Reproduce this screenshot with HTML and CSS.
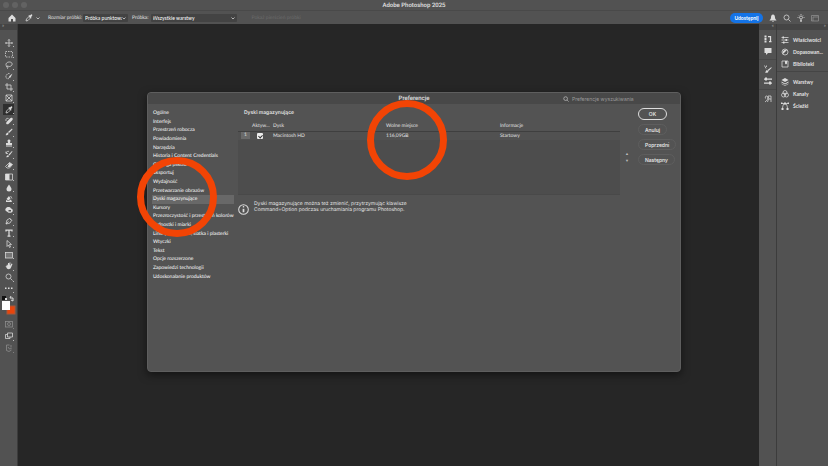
FILE: index.html
```html
<!DOCTYPE html>
<html lang="pl">
<head>
  <meta charset="UTF-8" />
  <meta name="viewport" content="width=device-width, initial-scale=1.0"/>
  <title>Adobe Photoshop 2025</title>
  <link rel="stylesheet" href="styles.css">
</head>
<body>
  <div class="app">
    <header class="title-bar">
      <div class="lights"><span></span><span></span><span></span></div>
      <h1>Adobe Photoshop 2025</h1>
    </header>

    <!-- Options bar -->
    <div class="options-bar">
      <button class="icon-btn home" aria-label="Ekran główny">
        <svg viewBox="0 0 16 16"><path class="fill" d="M8 1 1 8v7h5v-5h4v5h5V8z"/></svg>
      </button>
      <button class="icon-btn picker" aria-label="Kroplomierz">
        <svg viewBox="0 0 16 16"><path d="M2 14l1-4 5-5 3 3-5 5z"/><path class="fill" d="M7 4l5 5 1-1-1-2 2-2c2-2-1-4-2-3l-2 2-2-1z"/></svg>
      </button>
      <svg class="chevron" viewBox="0 0 8 8"><path d="M1 3l3 3 3-3"/></svg>
      <label class="size-label" for="sampleSize">Rozmiar próbki:</label>
      <div class="select-box size-box">
        <select id="sampleSize"><option>Próbka punktowa</option></select>
        <svg class="chevron" viewBox="0 0 8 8"><path d="M1 3l3 3 3-3"/></svg>
      </div>
      <label for="sampleLayers">Próbka:</label>
      <div class="select-box layers-box">
        <select id="sampleLayers"><option>Wszystkie warstwy</option></select>
        <svg class="chevron" viewBox="0 0 8 8"><path d="M1 3l3 3 3-3"/></svg>
      </div>
      <span class="ring-label">Pokaż pierścień próbki</span>
      <div class="bar-actions">
        <button class="share-btn">Udostępnij</button>
        <button class="icon-btn" aria-label="Powiadomienia"><svg viewBox="0 0 16 16"><path class="fill" d="M8 1c-3 0-4 3-4 6 0 3-2 4-3 6h14c-1-2-3-3-3-6 0-3-1-6-4-6zM6 14h4l-2 2z"/></svg></button>
        <button class="icon-btn" aria-label="Szukaj"><svg viewBox="0 0 16 16"><circle cx="7" cy="7" r="5"/><path d="M11 11l4 4"/></svg></button>
        <button class="icon-btn" aria-label="Odkryj"><svg viewBox="0 0 16 16"><circle cx="8" cy="7" r="3"/><path d="M7 11v4h2v-4M8 0v2M1 7h2M13 7h2M3 2l1 1M13 2l-1 1"/></svg></button>
        <button class="icon-btn dim" aria-label="Obszar roboczy"><svg viewBox="0 0 16 16"><path d="M1 14V3h14v11zM4 14V6h11"/></svg></button>
      </div>
    </div>

    <div class="workspace">
      <!-- Tools -->
      <aside class="toolbar">
        <div class="strip">»</div>
        <div class="tools">
          <button aria-label="Przesunięcie"><svg viewBox="0 0 16 16"><path d="M8 1v14M1 8h14M6 3l2-2 2 2M6 13l2 2 2-2M3 6L1 8l2 2M13 6l2 2-2 2"/></svg></button>
          <button aria-label="Zaznaczenie"><svg viewBox="0 0 16 16"><rect x="1" y="3" width="14" height="11" stroke-dasharray="3 2"/></svg></button>
          <button aria-label="Lasso"><svg viewBox="0 0 16 16"><path d="M4 11C0 8 2 2 9 2c7 0 7 8 0 9-2 0-3-1-5-1-2 1-1 3 1 2 2 1 1 3-1 3"/></svg></button>
          <button aria-label="Szybkie zaznaczanie"><svg viewBox="0 0 16 16"><path d="M8 13c-5 2-8-3-5-7 2-3 5-4 7-2" stroke-dasharray="3 1"/><path class="fill" d="M15 3L9 8l-2 4 4-1z"/></svg></button>
          <button aria-label="Kadrowanie"><svg viewBox="0 0 16 16"><path d="M4 0v12h12M0 4h12v12"/></svg></button>
          <button aria-label="Ramka"><svg viewBox="0 0 16 16"><path d="M2 2h12v12H2zM2 2l12 12M14 2L2 14"/></svg></button>
          <button class="active" aria-label="Kroplomierz"><svg viewBox="0 0 16 16"><path d="M2 14l1-4 5-5 3 3-5 5z"/><path class="fill" d="M7 4l5 5 1-1-1-2 2-2c2-2-1-4-2-3l-2 2-2-1z"/></svg></button>
          <button aria-label="Pędzel korygujący"><svg viewBox="0 0 16 16"><path class="fill" d="M4 9l6-6c3-4 8 0 4 4l-6 6c-4 4-8 0-4-4z"/><path d="M2 8c-1-4 1-6 5-5"/></svg></button>
          <button aria-label="Pędzel"><svg viewBox="0 0 16 16"><path class="fill" d="M14 1l1 2-7 7-2-2zM5 9l2 2c0 3-3 4-6 3 2-1 1-4 4-5z"/></svg></button>
          <button aria-label="Stempel"><svg viewBox="0 0 16 16"><path class="fill" d="M6 8L5 3c1-3 5-3 6 0l-1 5h4v4H2V8zM2 13h12v2H2z"/></svg></button>
          <button aria-label="Pędzel historii"><svg viewBox="0 0 16 16"><path class="fill" d="M14 2l1 1-6 8-2-2zM6 10l2 2c0 2-3 3-6 2 2-1 2-3 4-4z"/><path d="M2 3v4h4M2 6c1-3 4-4 6-3"/></svg></button>
          <button aria-label="Gumka"><svg viewBox="0 0 16 16"><path class="fill" d="M9 3l6 4-5 5H5z"/><path d="M9 3l6 4-6 7H4l-3-3z"/></svg></button>
          <button aria-label="Gradient"><svg viewBox="0 0 16 16"><path d="M1 2h14v12H1z"/><path class="fill" d="M1 2h8v12H1z"/></svg></button>
          <button aria-label="Rozmycie"><svg viewBox="0 0 16 16"><path class="fill" d="M8 1c3 5 5 7 5 9a5 5 0 0 1-10 0c0-2 2-4 5-9z"/></svg></button>
          <button aria-label="Palec"><svg viewBox="0 0 16 16"><path class="fill" d="M8 2l3 5-4 4-4-3zM2 10l5 2 5-3 2 5H2z"/><path d="M11 2l3 5"/></svg></button>
          <button aria-label="Gąbka"><svg viewBox="0 0 16 16"><path class="fill" fill-rule="evenodd" d="M1 6c2-5 9-5 11-1 5 1 4 7 1 8-4 1-7 1-9-2-3-1-4-3-3-5zm6 2v3h5V8z"/></svg></button>
          <button aria-label="Pióro"><svg viewBox="0 0 16 16"><path d="M2 14l2-8 5-3 4 4-3 5zM2 14l5-5M9 2l5 5"/></svg></button>
          <button aria-label="Tekst"><svg viewBox="0 0 16 16"><path class="bold" d="M2 5V2h12v3M8 2v12M5 14h6"/></svg></button>
          <button aria-label="Zaznaczanie ścieżek"><svg viewBox="0 0 16 16"><path d="M4 1v12l3-3 2 5 2-1-2-5h4z"/></svg></button>
          <button aria-label="Prostokąt"><svg viewBox="0 0 16 16"><rect class="soft" x="1" y="3" width="14" height="11"/></svg></button>
          <button aria-label="Rączka"><svg viewBox="0 0 16 16"><path class="fill" d="M3 6l2-1 1 3V2h2v5l1-6h2l-1 7 3-5 2 1-3 7c-1 4-8 5-9 0L1 9l2-1 1 1z"/></svg></button>
          <button aria-label="Lupka"><svg viewBox="0 0 16 16"><circle cx="7" cy="7" r="5"/><path d="M11 11l4 4"/></svg></button>
          <button aria-label="Więcej narzędzi"><svg viewBox="0 0 16 16"><path class="fill" d="M0 7h3v3H0zM6 7h3v3H6zM12 7h3v3h-3z"/></svg></button>
        </div>
        <div class="colors">
          <svg viewBox="0 0 16 20">
            <rect x="2" y="1" width="4" height="4" fill="#111" stroke="none"/>
            <rect x="5" y="3" width="2" height="2" fill="#ddd" stroke="none"/>
            <path d="M10 3h3v3M10 3l1-2M13 6l-2-1" fill="none" stroke="#ddd"/>
            <rect x="7" y="11" width="8" height="8" fill="#e8450c" stroke="#a8583a"/>
            <rect x="2" y="6" width="8" height="9" fill="#fff" stroke="none"/>
          </svg>
        </div>
        <div class="tools modes">
          <button class="dim" aria-label="Szybka maska"><svg viewBox="0 0 16 16"><rect x="1" y="3" width="14" height="11"/><circle cx="8" cy="8" r="3"/></svg></button>
          <button aria-label="Tryb ekranu"><svg viewBox="0 0 16 16"><path d="M5 2h10v8H5zM5 5H1v8h9v-3"/></svg></button>
          <button class="dim" aria-label="Generowanie"><svg viewBox="0 0 16 16"><path d="M9 2H3v11l5 2 5-3M6 6l3 4 4-1M12 2v5"/></svg></button>
        </div>
      </aside>

      <main class="canvas"></main>

      <!-- Collapsed panels -->
      <aside class="dock">
        <div class="strip">«</div>
        <div class="dock-group">
          <button aria-label="Historia"><svg viewBox="0 0 16 16"><path class="fill" d="M1 1h4v4H1zM1 6h4v4H1zM1 11h4v4H1z"/><path class="bold" d="M8 3h5v9M10 13h5"/></svg></button>
          <button aria-label="Komentarze"><svg viewBox="0 0 16 16"><path class="fill" d="M1 2h14v10H8l-4 4v-4H1z"/></svg></button>
        </div>
        <div class="dock-group">
          <button aria-label="Pędzle"><svg viewBox="0 0 16 16"><path class="fill" d="M15 4v2l-6 6-2-2zM6 10l3 3c-1 3-4 3-7 2 2-1 1-4 4-5z"/><path d="M1 1l3 6M5 1v3"/></svg></button>
          <button aria-label="Ustawienia pędzla"><svg viewBox="0 0 16 16"><path class="bold" d="M0 4h16M0 12h16"/><path class="fill" d="M2 1h4v6H2zM10 9h4v6h-4z"/></svg></button>
        </div>
        <div class="dock-group">
          <button aria-label="Glify"><svg viewBox="0 0 16 16"><path d="M3 7c-2-5 3-6 4-4 2 4-1 8-5 11M8 2h6v12M14 8H9l-2 6M8 2l2 6"/></svg></button>
        </div>
      </aside>

      <aside class="panels">
        <div class="strip">»</div>
        <div class="panel-group">
          <button><svg viewBox="0 0 16 16"><path d="M1 3h14M1 8h14M1 13h14"/><path class="fill" d="M3 1h3v4H3zM9 6h3v4H9zM4 11h3v4H4z"/></svg>Właściwości</button>
          <button><svg viewBox="0 0 16 16"><circle cx="8" cy="8" r="6"/><path class="fill" d="M12 4a6 6 0 0 0-8 8z"/></svg>Dopasowan...</button>
          <button><svg viewBox="0 0 16 16"><path d="M2 2h12v12H2z"/><path class="fill" d="M8 2h4v7L10 7 8 9z"/></svg>Biblioteki</button>
        </div>
        <div class="panel-group">
          <button><svg viewBox="0 0 16 16"><path class="fill" d="M8 0l7 4-7 4-7-4zM1 7l7 4 7-4v2l-7 4-7-4zM1 11l7 4 7-4v1l-7 4-7-4z"/></svg>Warstwy</button>
          <button><svg viewBox="0 0 16 16"><circle cx="8" cy="5" r="4"/><circle cx="5" cy="10" r="4"/><circle cx="11" cy="10" r="4"/></svg>Kanały</button>
          <button><svg viewBox="0 0 16 16"><path d="M3 14C3 8 5 3 8 3s5 5 5 11M1 3h14"/><path class="fill" d="M0 1h3v3H0zM6 1h4v4H6zM13 1h3v3h-3zM1 12h4v4H1zM11 12h4v4h-4z"/></svg>Ścieżki</button>
        </div>
      </aside>
    </div>
  </div>

  <!-- Preferences -->
  <div class="overlay">
    <section class="dialog" role="dialog" aria-labelledby="prefTitle">
      <div class="dialog-title">
        <h2 id="prefTitle">Preferencje</h2>
        <label class="search">
          <svg viewBox="0 0 16 16"><circle cx="7" cy="7" r="5"/><path d="M11 11l4 4"/></svg>
          <input type="text" placeholder="Preferencje wyszukiwania" aria-label="Preferencje wyszukiwania">
        </label>
      </div>
      <div class="dialog-body">
        <nav class="sections">
          <a href="#">Ogólne</a>
          <a href="#">Interfejs</a>
          <a href="#">Przestrzeń robocza</a>
          <a href="#">Powiadomienia</a>
          <a href="#">Narzędzia</a>
          <a href="#">Historia i Content Credentials</a>
          <a href="#">Obsługa plików</a>
          <a href="#">Eksportuj</a>
          <a href="#">Wydajność</a>
          <a href="#">Przetwarzanie obrazów</a>
          <a href="#" class="selected">Dyski magazynujące</a>
          <a href="#">Kursory</a>
          <a href="#">Przezroczystość i przestrzeń kolorów</a>
          <a href="#">Jednostki i miarki</a>
          <a href="#">Linie pomocnicze, siatka i plasterki</a>
          <a href="#">Wtyczki</a>
          <a href="#">Tekst</a>
          <a href="#">Opcje rozszerzone</a>
          <a href="#">Zapowiedzi technologii</a>
          <a href="#">Udoskonalanie produktów</a>
        </nav>

        <div class="content">
          <h3>Dyski magazynujące</h3>
          <div class="disks">
            <div class="disk-box">
              <table>
                <colgroup><col class="col-no"><col class="col-on"><col class="col-disk"><col class="col-free"><col></colgroup>
                <thead>
                  <tr><th></th><th>Aktyw...</th><th>Dysk</th><th>Wolne miejsce</th><th>Informacje</th></tr>
                </thead>
                <tbody>
                  <tr>
                    <td><span class="no">1</span></td>
                    <td><input type="checkbox" checked aria-label="Macintosh HD aktywny"></td>
                    <td>Macintosh HD</td>
                    <td>116,09GB</td>
                    <td>Startowy</td>
                  </tr>
                </tbody>
              </table>
            </div>
            <div class="order">
              <button aria-label="W górę">▲</button>
              <button aria-label="W dół">▼</button>
            </div>
          </div>
          <div class="note">
            <svg viewBox="0 0 16 16"><circle cx="8" cy="8" r="7"/><path class="bold" d="M8 7v5"/><path class="fill" d="M7 3h2v2H7z"/></svg>
            <p>Dyski magazynujące można też zmienić, przytrzymując klawisze<br>Command+Option podczas uruchamiania programu Photoshop.</p>
          </div>
        </div>

        <div class="buttons">
          <button class="primary">OK</button>
          <button>Anuluj</button>
          <button>Poprzedni</button>
          <button>Następny</button>
        </div>
      </div>
      <div class="ring ring-section"></div>
      <div class="ring ring-space"></div>
    </section>
  </div>
</body>
</html>
```
FILE: styles.css
```css
* {
  box-sizing: border-box;
}

body {
  margin: 0;
  font-family: Lato, "Liberation Sans", sans-serif;
  font-size: 5px;
  line-height: 6px;
  color: #e2e2e2;
  background: #262626;
  text-rendering: geometricPrecision;
}

h1, h2, h3, p {
  margin: 0;
}

button, input, select {
  margin: 0;
  padding: 0;
  border: none;
  background: none;
  color: inherit;
  font: inherit;
}

svg {
  display: block;
  width: 8px;
  height: 8px;
  fill: none;
  stroke: #dcdcdc;
  stroke-width: 1.5;
}

svg .fill {
  fill: #dcdcdc;
  stroke: none;
}

svg .bold {
  stroke-width: 2.5;
}

svg .soft {
  fill: #777;
}

.dim {
  opacity: 0.45;
}

.app {
  display: flex;
  flex-direction: column;
  min-height: 100vh;
}

.title-bar {
  position: relative;
  height: 11px;
  background: #525252;
  border-bottom: 1px solid #494949;
}

.title-bar h1 {
  font-family: Roboto, sans-serif;
  font-size: 6px;
  line-height: 11px;
  font-weight: 500;
  text-align: center;
}

.lights {
  position: absolute;
  left: 3px;
  top: 2px;
  display: flex;
  gap: 3px;
}

.lights span {
  width: 6px;
  height: 6px;
  border-radius: 50%;
  background: #626262;
}

/* options bar */
.options-bar {
  display: flex;
  align-items: center;
  height: 13px;
  padding: 0 9px 0 8px;
  background: #525252;
  white-space: nowrap;
}

.picker {
  margin-left: 9px;
}

.chevron {
  width: 4px;
  height: 4px;
  margin-left: 3px;
}

.size-label {
  width: 35px;
  margin-left: 8px;
}

.select-box {
  display: flex;
  align-items: center;
  height: 8px;
  padding-right: 2px;
  background: #434343;
  border-radius: 1px;
}

.select-box select {
  flex: 1;
  min-width: 0;
  padding-left: 2px;
  appearance: none;
  color: #fff;
}

.select-box .chevron {
  margin-left: 0;
}

.size-box {
  width: 45px;
  margin-right: 4px;
}

.layers-box {
  width: 86px;
  margin-left: 2px;
}

.ring-label {
  margin-left: 15px;
  color: #6c6c6c;
}

.bar-actions {
  display: flex;
  align-items: center;
  gap: 6px;
  margin-left: auto;
}

.share-btn {
  width: 33px;
  height: 10px;
  border-radius: 5px;
  background: #1473e6;
  color: #fff;
  font-weight: 700;
}

/* workspace */
.workspace {
  display: flex;
  flex: 1;
}

.toolbar {
  width: 18px;
  background: #525252;
  border-right: 1px solid #3c3c3c;
}

.strip {
  height: 6px;
  padding: 0 2px;
  background: #454545;
  line-height: 5px;
  color: #b5b5b5;
}

.tools {
  display: grid;
  grid-auto-rows: 1fr;
  height: 257px;
  margin-top: 7px;
}

.tools button {
  display: flex;
  align-items: center;
  justify-content: center;
  position: relative;
  width: 11px;
  margin-left: 3px;
}

.tools button::after {
  content: "";
  position: absolute;
  right: 0;
  bottom: 1px;
  width: 1px;
  height: 1px;
  background: #bbb;
}

.tools .active {
  background: #2f2f2f;
}

.colors svg {
  width: 16px;
  height: 20px;
  stroke-width: 1;
}

.colors {
  padding-top: 1px;
}

.modes {
  height: 36px;
  margin-top: 3px;
}

.canvas {
  flex: 1;
}

.dock {
  width: 18px;
  background: #525252;
  border-right: 1px solid #3c3c3c;
}

.dock .strip,
.panels .strip {
  text-align: right;
}

.dock-group {
  display: flex;
  flex-direction: column;
  align-items: center;
  gap: 4px;
  padding: 5px 0 4px;
  border-bottom: 1px solid #484848;
}

.dock-group:last-child,
.panel-group:last-child {
  border-bottom: none;
}

.panels {
  width: 51px;
  background: #525252;
}

.panel-group {
  padding: 4px 0 1px;
  border-bottom: 1px solid #454545;
}

.panel-group button {
  display: flex;
  align-items: center;
  gap: 4px;
  height: 12px;
  padding-left: 4px;
  font-weight: 700;
  white-space: nowrap;
}

/* preferences dialog */
.overlay {
  position: absolute;
  inset: 0;
  display: flex;
  align-items: center;
  justify-content: center;
  padding-bottom: 2px;
}

.dialog {
  position: relative;
  width: 65%;
  max-width: 534px;
  min-height: 280px;
  background: #535353;
  border: 1px solid #5e5e5e;
  border-radius: 4px;
  box-shadow: 0 3px 8px rgba(0, 0, 0, 0.5);
}

.dialog-title {
  position: relative;
  height: 11px;
  background: #484848;
  border-radius: 3px 3px 0 0;
}

.dialog-title h2 {
  font-family: Roboto, sans-serif;
  font-size: 6px;
  line-height: 11px;
  font-weight: 500;
  text-align: center;
}

.search {
  position: absolute;
  top: 1px;
  right: 30px;
  display: flex;
  align-items: center;
  gap: 3px;
  width: 87px;
  height: 9px;
  font-family: Inter, sans-serif;
}

.search svg {
  width: 6px;
  height: 6px;
}

.search input {
  flex: 1;
  min-width: 0;
}

.search input::placeholder {
  color: #999;
}

.dialog-body {
  display: flex;
  padding: 4px 4px 0;
}

.sections {
  display: grid;
  grid-auto-rows: 1fr;
  flex-shrink: 0;
  width: 80px;
  height: 172px;
  margin-top: 1px;
}

.sections a {
  display: flex;
  align-items: center;
  padding-left: 1px;
  color: #fff;
  text-decoration: none;
  white-space: nowrap;
}

.sections .selected {
  background: #686868;
}

.content {
  flex: 1;
  padding-left: 6px;
}

.content h3 {
  padding: 1px 0 0 6px;
  font-family: Inter, sans-serif;
  font-size: 5px;
  line-height: 8px;
  font-weight: 600;
}

.disks {
  display: flex;
  align-items: flex-end;
  margin-top: 5px;
}

.disk-box {
  flex: 1;
  min-height: 73px;
  background: linear-gradient(#535353 9px, #4d4d4d 9px);
  border-bottom: 1px solid #494949;
}

table {
  width: 100%;
  table-layout: fixed;
  border-collapse: collapse;
}

th {
  height: 9px;
  padding: 0;
  border-bottom: 1px solid #3f3f3f;
  font-weight: 400;
  text-align: left;
}

td {
  height: 9px;
  padding: 0;
  background: #515151;
}

.col-no {
  width: 14px;
}

.col-on {
  width: 21px;
}

.col-disk {
  width: 113px;
}

.col-free {
  width: 114px;
}

.no {
  display: block;
  width: 9px;
  height: 7px;
  margin-left: 3px;
  background: #6a6a6a;
  line-height: 7px;
  text-align: center;
}

td input {
  display: block;
  position: relative;
  width: 6px;
  height: 6px;
  margin-left: 5px;
  border-radius: 1px;
  background: #eee;
  appearance: none;
}

td input:checked::after {
  content: "";
  position: absolute;
  left: 2px;
  top: 1px;
  width: 2px;
  height: 3px;
  border: solid #333;
  border-width: 0 1px 1px 0;
  transform: rotate(45deg);
}

.order {
  display: flex;
  flex-direction: column;
  gap: 1px;
  width: 14px;
  margin-bottom: 31px;
}

.order button {
  font-size: 4px;
  color: #bbb;
}

.note {
  display: flex;
  align-items: center;
  gap: 5px;
  margin-top: 3px;
  font-family: Inter, sans-serif;
}

.note svg {
  width: 11px;
  height: 11px;
  margin-top: 6px;
}

.buttons {
  display: flex;
  flex-direction: column;
  align-items: flex-start;
  gap: 4px;
  width: 42px;
  padding-left: 4px;
  font-family: Inter, sans-serif;
}

.buttons button {
  height: 11px;
  padding: 0 6px;
  border: 1px solid #5e5e5e;
  border-radius: 6px;
  color: #f0f0f0;
  font-weight: 500;
}

.buttons .primary {
  width: 29px;
  height: 12px;
  border-color: #ddd;
}

/* highlights */
.ring {
  position: absolute;
  width: 80px;
  height: 80px;
  border: 7px solid #f24405;
  border-radius: 50%;
}

.ring-section {
  left: -11px;
  top: 64px;
}

.ring-space {
  left: 219px;
  top: 7px;
}
```
